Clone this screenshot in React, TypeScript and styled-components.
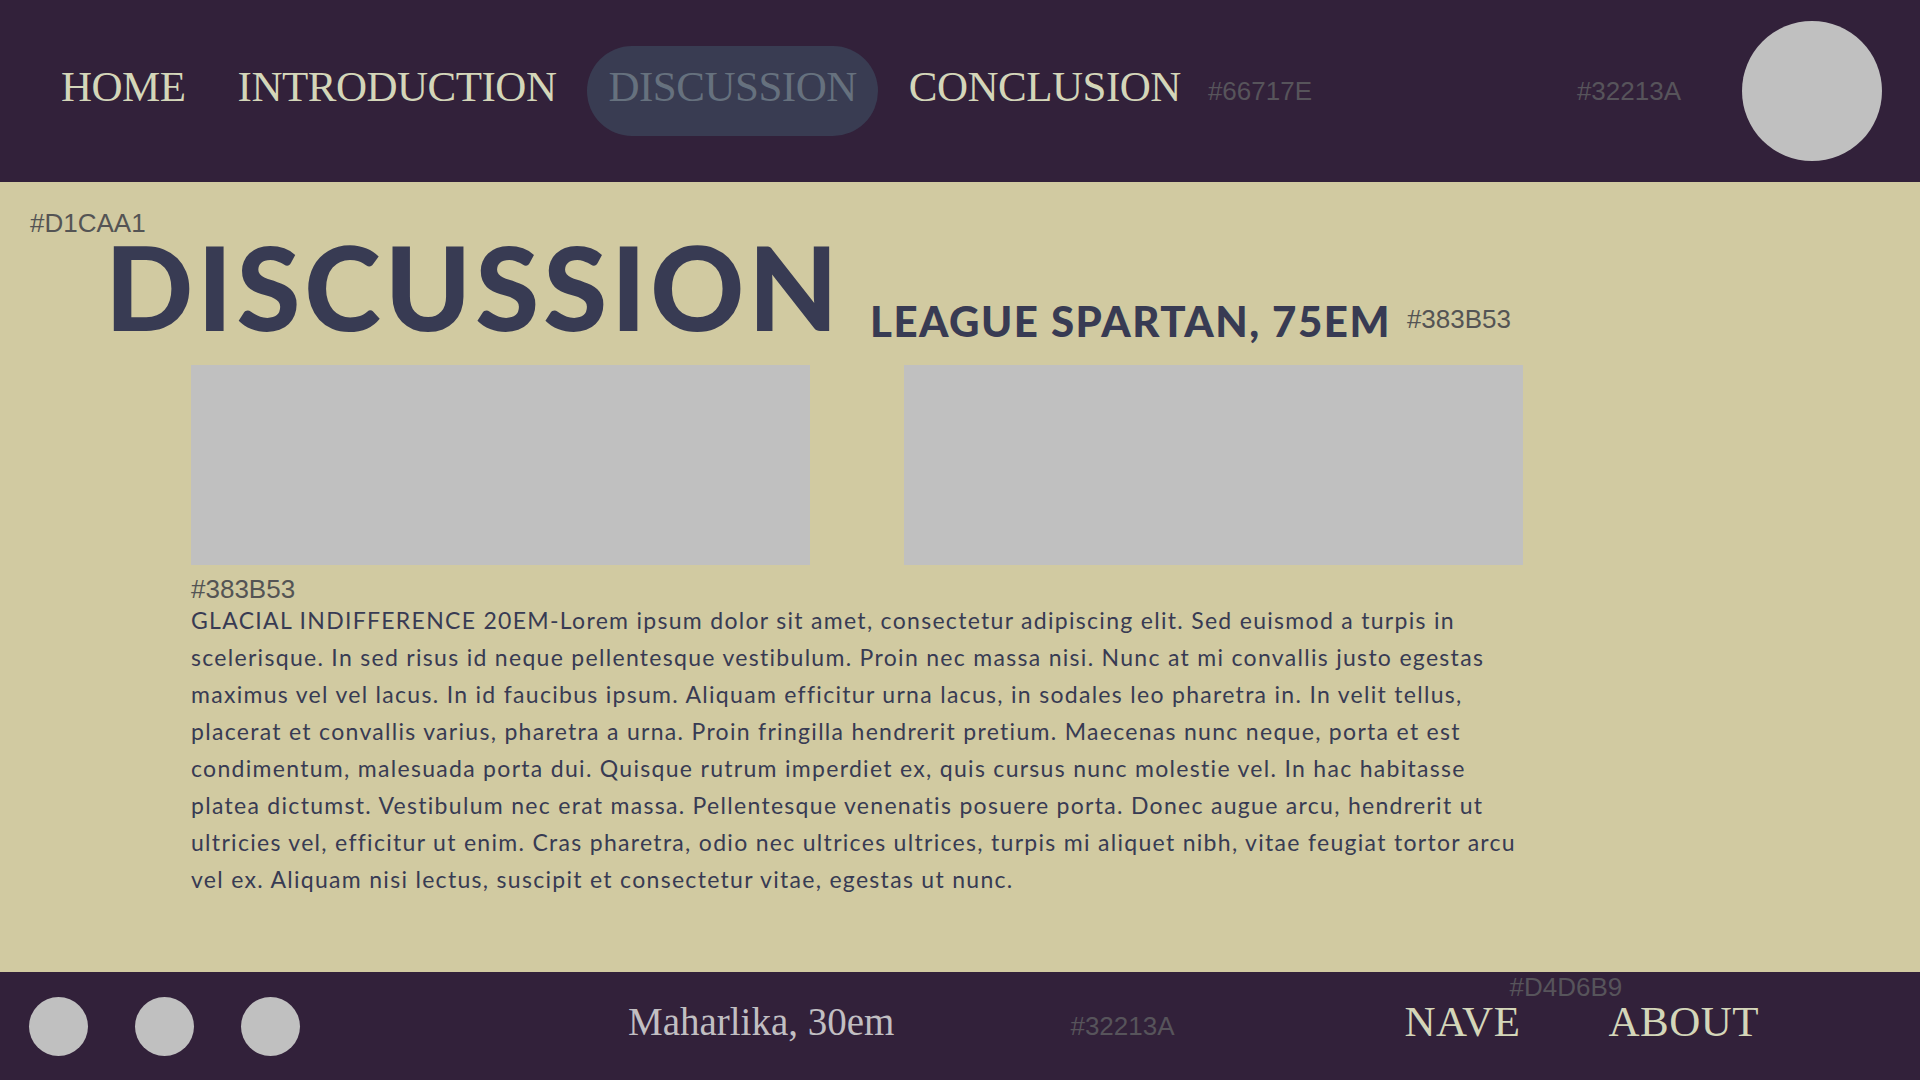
import React from "react";
import styled, { createGlobalStyle } from "styled-components";

const GlobalStyle = createGlobalStyle`
  html, body { margin: 0; padding: 0; }
  body { background: #32213A; font-family: "Liberation Sans", Arial, sans-serif; }
  * { box-sizing: border-box; }
`;

const Page = styled.div`
  width: 1920px;
  height: 1080px;
  display: flex;
  flex-direction: column;
  overflow: hidden;
`;

const Header = styled.header`
  height: 182px;
  flex: none;
  background: #32213A;
  display: flex;
  align-items: center;
  padding: 0 38px 0 40px;
`;

const Nav = styled.nav`
  display: flex;
  align-items: center;
  gap: 10px;
`;

const NavItem = styled.a<{ $active?: boolean }>`
  height: 90px;
  padding: 0 21px 10px;
  border-radius: 45px;
  display: flex;
  align-items: center;
  font-family: "Liberation Serif", "Times New Roman", serif;
  font-size: 43px;
  line-height: 1;
  letter-spacing: -0.5px;
  color: ${(p) => (p.$active ? "#66717E" : "#D4D6B9")};
  background: ${(p) => (p.$active ? "#393C52" : "transparent")};
  cursor: pointer;
`;

const Swatch = styled.span<{ $tone: "dark" | "light" }>`
  font-family: "Liberation Sans", Arial, sans-serif;
  font-size: 26px;
  line-height: 26px;
  color: ${(p) => (p.$tone === "dark" ? "#57545b" : "#545454")};
  white-space: nowrap;
`;

const HeaderSwatch = styled(Swatch)`
  margin-left: 6px;
`;

const HeaderSwatchRight = styled(Swatch)`
  margin-left: auto;
  margin-right: 61px;
`;

const Avatar = styled.div`
  width: 140px;
  height: 140px;
  border-radius: 50%;
  background: #C0C0C0;
  flex: none;
`;

const Main = styled.main`
  flex: 1;
  background: #D1CAA1;
  padding: 28px 0 0 30px;
  display: flex;
  flex-direction: column;
  align-items: flex-start;
`;

const TitleRow = styled.div`
  display: flex;
  align-items: flex-end;
  margin-top: 2px;
  margin-left: 75px;
`;

const Title = styled.h1`
  margin: 0;
  font-family: Lato, "Open Sans", sans-serif;
  font-weight: 900;
  font-size: 116px;
  line-height: 0.85;
  letter-spacing: 4px;
  color: #383B53;
`;

const Subtitle = styled.h2`
  margin: 0 0 -5px 28px;
  font-family: Lato, "Open Sans", sans-serif;
  font-weight: 900;
  font-size: 42px;
  line-height: 1;
  letter-spacing: 1.5px;
  color: #383B53;
  white-space: nowrap;
`;

const TitleSwatch = styled(Swatch)`
  margin: 0 0 5px 16px;
`;

const Gallery = styled.div`
  display: flex;
  gap: 94px;
  margin: 28px 0 0 161px;
`;

const Placeholder = styled.div`
  width: 619px;
  height: 200px;
  background: #C0C0C0;
`;

const Caption = styled(Swatch)`
  display: block;
  margin: 11px 0 0 161px;
`;

const Body = styled.p`
  margin: 0 0 0 161px;
  font-family: Lato, "Open Sans", sans-serif;
  font-size: 23px;
  line-height: 37px;
  letter-spacing: 1.3px;
  color: #383B53;
`;

const Line = styled.span`
  display: block;
  white-space: nowrap;
`;

const Footer = styled.footer`
  height: 108px;
  flex: none;
  background: #32213A;
  display: flex;
  align-items: center;
  padding-left: 29px;
`;

const Dots = styled.div`
  display: flex;
  gap: 47px;
`;

const Dot = styled.span`
  width: 59px;
  height: 59px;
  border-radius: 50%;
  background: #C0C0C0;
`;

const FontName = styled.span`
  margin: 0 0 10px 328px;
  font-family: "Liberation Serif", "Times New Roman", serif;
  font-size: 39px;
  line-height: 1;
  color: #C1BFC2;
  white-space: nowrap;
`;

const FooterSwatch = styled(Swatch)`
  margin-left: 176px;
`;

const FooterNavBlock = styled.div`
  align-self: flex-start;
  margin: 2px 0 0 230px;
  display: flex;
  flex-direction: column;
`;

const FooterNavSwatch = styled(Swatch)`
  padding-left: 105px;
`;

const FooterLinks = styled.div`
  display: flex;
  gap: 88px;
`;

const FooterLink = styled.a`
  font-family: "Liberation Serif", "Times New Roman", serif;
  font-size: 43px;
  line-height: 1;
  letter-spacing: 0.5px;
  color: #D4D6B9;
  cursor: pointer;
`;

const navItems = ["HOME", "INTRODUCTION", "DISCUSSION", "CONCLUSION"];

const bodyLines = [
  "GLACIAL INDIFFERENCE 20EM-Lorem ipsum dolor sit amet, consectetur adipiscing elit. Sed euismod a turpis in",
  "scelerisque. In sed risus id neque pellentesque vestibulum. Proin nec massa nisi. Nunc at mi convallis justo egestas",
  "maximus vel vel lacus. In id faucibus ipsum. Aliquam efficitur urna lacus, in sodales leo pharetra in. In velit tellus,",
  "placerat et convallis varius, pharetra a urna. Proin fringilla hendrerit pretium. Maecenas nunc neque, porta et est",
  "condimentum, malesuada porta dui. Quisque rutrum imperdiet ex, quis cursus nunc molestie vel. In hac habitasse",
  "platea dictumst. Vestibulum nec erat massa. Pellentesque venenatis posuere porta. Donec augue arcu, hendrerit ut",
  "ultricies vel, efficitur ut enim. Cras pharetra, odio nec ultrices ultrices, turpis mi aliquet nibh, vitae feugiat tortor arcu",
  "vel ex. Aliquam nisi lectus, suscipit et consectetur vitae, egestas ut nunc.",
];

export default function App() {
  return (
    <Page>
      <GlobalStyle />
      <Header>
        <Nav>
          {navItems.map((item) => (
            <NavItem key={item} $active={item === "DISCUSSION"}>
              {item}
            </NavItem>
          ))}
        </Nav>
        <HeaderSwatch $tone="dark">#66717E</HeaderSwatch>
        <HeaderSwatchRight $tone="dark">#32213A</HeaderSwatchRight>
        <Avatar />
      </Header>
      <Main>
        <Swatch $tone="light">#D1CAA1</Swatch>
        <TitleRow>
          <Title>DISCUSSION</Title>
          <Subtitle>LEAGUE SPARTAN, 75EM</Subtitle>
          <TitleSwatch $tone="light">#383B53</TitleSwatch>
        </TitleRow>
        <Gallery>
          <Placeholder />
          <Placeholder />
        </Gallery>
        <Caption $tone="light">#383B53</Caption>
        <Body>
          {bodyLines.map((l, i) => (
            <Line key={i}>{l}</Line>
          ))}
        </Body>
      </Main>
      <Footer>
        <Dots>
          <Dot />
          <Dot />
          <Dot />
        </Dots>
        <FontName>Maharlika, 30em</FontName>
        <FooterSwatch $tone="dark">#32213A</FooterSwatch>
        <FooterNavBlock>
          <FooterNavSwatch $tone="dark">#D4D6B9</FooterNavSwatch>
          <FooterLinks>
            <FooterLink>NAVE</FooterLink>
            <FooterLink>ABOUT</FooterLink>
          </FooterLinks>
        </FooterNavBlock>
      </Footer>
    </Page>
  );
}
